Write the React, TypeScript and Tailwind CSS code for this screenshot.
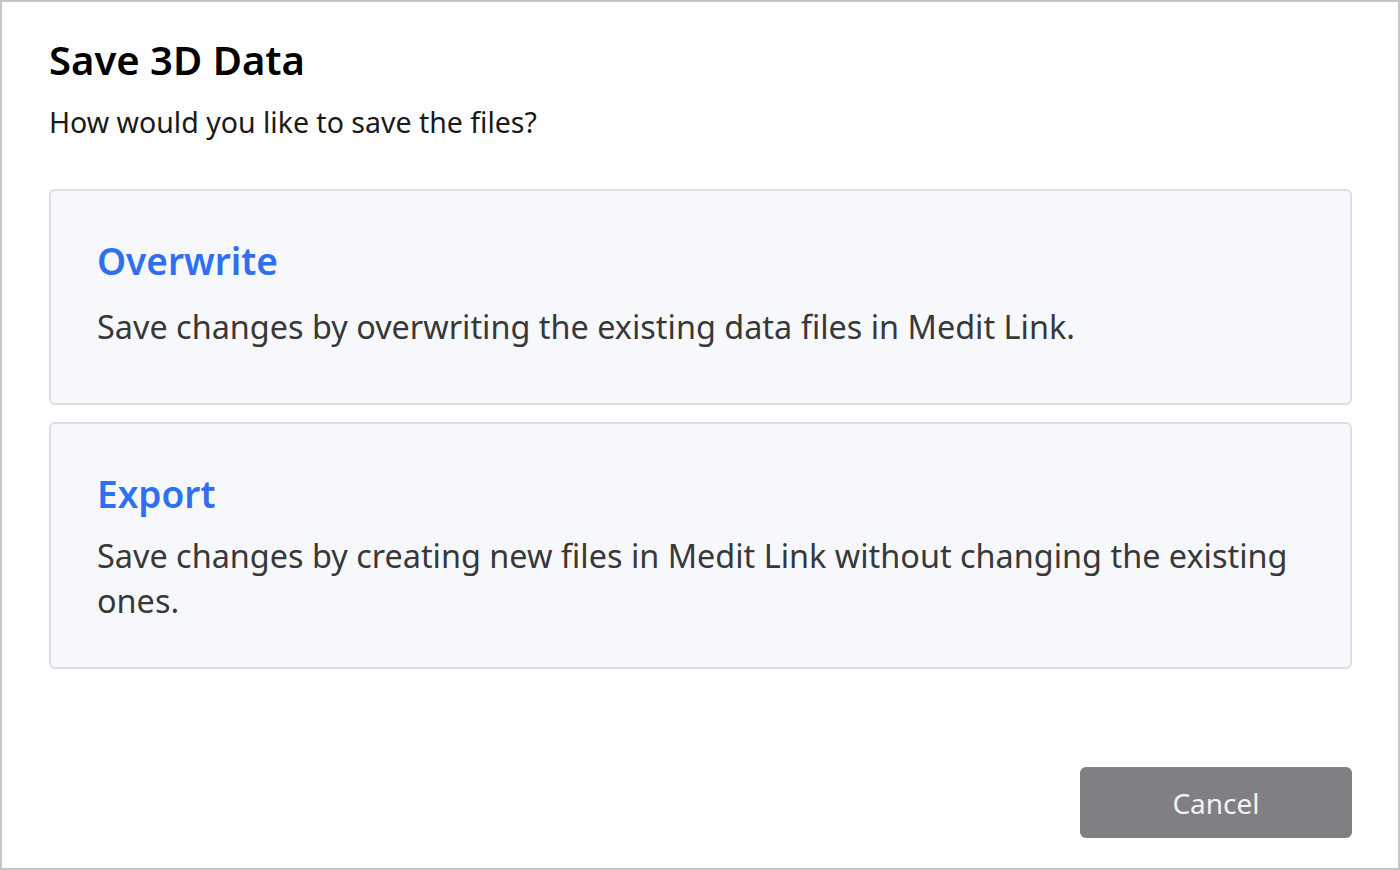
export default function App() {
  return (
    <div
      className="flex h-[870px] w-full flex-col border-2 border-[#c6c6c6] bg-white pl-[47px] pr-[46px] pt-[31px] pb-[30px] text-[#111]"
      style={{ fontFamily: '"Noto Sans", "Open Sans", sans-serif' }}
    >
      <h1 className="text-[40px] font-semibold leading-[54px] text-black">Save 3D Data</h1>
      <p className="mt-[16px] text-[28.5px] leading-[38px] text-[#1a1a1a]">How would you like to save the files?</p>

      <div className="mt-[48px] flex flex-col gap-[17px]">
        <div className="min-h-[216px] rounded-[6px] border-2 border-[#dcdde2] bg-[#f7f8fc] px-[46px] pt-[45px] pb-[44px]">
          <h2 className="text-[37px] font-semibold leading-[50px] text-[#2f6ff2]">Overwrite</h2>
          <p className="mt-[18px] text-[32.4px] leading-[45px] text-[#383838]">
            Save changes by overwriting the existing data files in Medit Link.
          </p>
        </div>
        <div className="rounded-[6px] border-2 border-[#dcdde2] bg-[#f7f8fc] px-[46px] pt-[45px] pb-[44px]">
          <h2 className="text-[37px] font-semibold leading-[50px] text-[#2f6ff2]">Export</h2>
          <p className="mt-[14px] text-[32.4px] leading-[45px] text-[#383838]">
            Save changes by creating new files in Medit Link without changing the existing ones.
          </p>
        </div>
      </div>

      <div className="mt-auto flex justify-end">
        <button
          type="button"
          className="h-[71px] w-[272px] rounded-[6px] bg-[#808084] text-[28px] text-[#f2f2f2]"
        >
          Cancel
        </button>
      </div>
    </div>
  );
}
